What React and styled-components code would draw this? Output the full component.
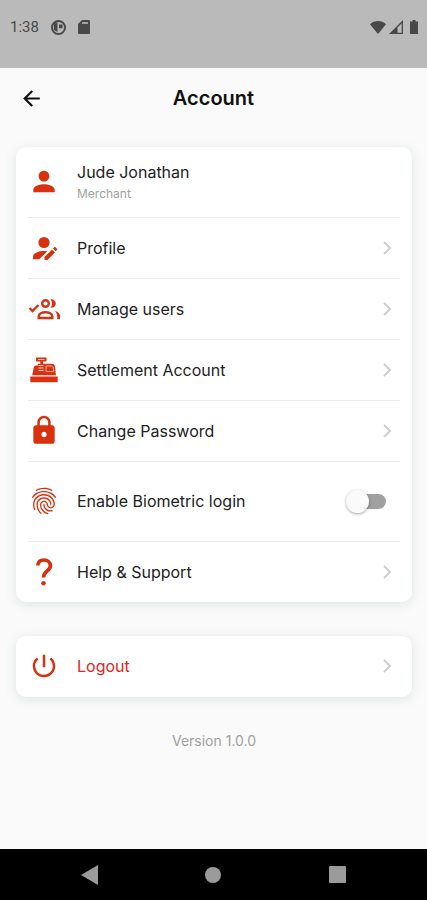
import React, { useState } from "react";
import styled, { createGlobalStyle } from "styled-components";
import {
  MdArrowBack,
  MdFingerprint,
  MdLock,
  MdPerson,
  MdPowerSettingsNew,
} from "react-icons/md";

const GlobalStyle = createGlobalStyle`
  * {
    box-sizing: border-box;
  }

  body {
    margin: 0;
    background: #fafafa;
    font-family: Inter, "Open Sans", sans-serif;
  }
`;

const Screen = styled.div`
  display: flex;
  flex-direction: column;
  min-height: 100vh;
`;

const StatusBar = styled.div`
  display: flex;
  justify-content: space-between;
  height: 68px;
  padding: 15px 7px 0 10px;
  background: #bababa;
  color: #484848;
`;

const StatusGroup = styled.div`
  display: flex;
  align-items: center;
  gap: ${(props) => props.$gap};
  height: 24px;
`;

const Clock = styled.span`
  font-family: Roboto, sans-serif;
  font-size: 15px;
`;

const Header = styled.header`
  display: grid;
  grid-template-columns: 30px 1fr 30px;
  align-items: center;
  height: 60px;
  padding: 0 16px;
`;

const BackButton = styled.button`
  display: flex;
  justify-content: center;
  padding: 0;
  border: 0;
  background: none;
  color: #111;
`;

const Title = styled.h1`
  margin: 0;
  color: #111;
  font-size: 20px;
  font-weight: 600;
  text-align: center;
`;

const Main = styled.main`
  display: flex;
  flex: 1;
  flex-direction: column;
  gap: 34px;
  padding: 19px 15px 24px 16px;
`;

const Card = styled.section`
  padding: 0 12px;
  border-radius: 10px;
  background: #fff;
  box-shadow: 0 2px 12px rgba(60, 90, 100, 0.14);
`;

const Row = styled.div`
  display: grid;
  grid-template-columns: 32px 1fr auto;
  align-items: center;
  column-gap: 17px;
  height: ${(props) => props.$height || "61px"};
  padding-bottom: 1px;
  color: ${(props) => props.$color || "#222"};
  font-size: 16px;
  line-height: 24px;
  text-decoration: none;

  & + & {
    border-top: 1px solid #ececec;
  }
`;

const IconBox = styled.span`
  display: flex;
  align-items: center;
  justify-content: center;
  height: 32px;
  color: #d9310f;
`;

const Role = styled.div`
  color: #a0a0a0;
  font-size: 12px;
  line-height: 20px;
`;

const Arrow = styled.svg`
  margin-right: 8px;
`;

const Switch = styled.input`
  appearance: none;
  display: flex;
  align-items: center;
  width: 32px;
  height: 15px;
  margin: 0 14px 0 0;
  border-radius: 8px;
  background: #a0a0a0;

  &::before {
    content: "";
    flex: none;
    width: 23px;
    height: 23px;
    margin-left: -8px;
    border-radius: 50%;
    background: #fafafa;
    box-shadow: 0 1px 3px rgba(0, 0, 0, 0.35);
  }

  &:checked {
    background: #eba293;
  }

  &:checked::before {
    margin-left: 17px;
    background: #d9310f;
  }
`;

const Version = styled.p`
  margin: 0;
  color: #a0a0a0;
  font-size: 14px;
  line-height: 20px;
  text-align: center;
`;

const NavBar = styled.nav`
  display: grid;
  grid-template-columns: repeat(3, 1fr);
  height: 51px;
  padding: 0 28px;
  background: #000;
`;

const NavButton = styled.button`
  display: flex;
  align-items: center;
  justify-content: center;
  padding: 0;
  border: 0;
  background: none;
  color: #9b9b9b;
`;

function ProfileIcon() {
  return (
    <svg width="32" height="32" viewBox="0 0 32 32" fill="currentColor">
      <circle cx="16" cy="10.500" r="5.600" />
      <path d="M5 27.300v-2.800c0-3.500 5.500-5.800 12.500-5.600l2 .2-8.200 8.200z" />
      <path d="M16.500 28v-3l7.500-7.500 3 3-7.500 7.500z" />
      <path d="M25 16.500l1.200-1.200c.4-.4.900-.4 1.300 0l1.400 1.400c.4.400.4.900 0 1.300l-1.200 1.200z" />
    </svg>
  );
}

function UsersIcon() {
  return (
    <svg
      width="32"
      height="32"
      viewBox="0 0 32 32"
      fill="none"
      stroke="currentColor"
      strokeWidth="2.400"
    >
      <path d="M1.500 15l3 3 6-6" />
      <circle cx="17.500" cy="10.500" r="3.300" />
      <path d="M10.700 25v-1.400c0-2.900 3.400-4.400 6.800-4.400s6.800 1.500 6.800 4.400V25z" />
      <path
        d="M22.500 6.200c3-.3 5.300 1.700 5.300 4.300s-2.300 4.600-5.300 4.300c2.100-2.800 2.100-5.800 0-8.600zM26.700 17.800c3.400 1 5.500 3 5.500 5.700v2.700h-3v-2.700c0-2.200-.8-4-2.500-5.700z"
        fill="currentColor"
        stroke="none"
      />
    </svg>
  );
}

function RegisterIcon() {
  return (
    <svg width="32" height="32" viewBox="0 0 32 32" fill="currentColor">
      <path d="M8 3.500h10.500v4H15v2.200h8.500c2 0 3 .8 3.400 2.500l1.100 9H4.200l1.500-7.500c.3-1.500 1-2.200 2.500-2.200h1.600V9.700h2.500V7.500H8z" />
      <path
        d="M10 5.500h6.500M10.500 11.500h5M10.500 14h5M10.500 16.500h5"
        stroke="#fbd9d2"
        strokeWidth="1.200"
      />
      <path
        d="M18 17.500V12h5.500c1 0 1.500.8 1.700 1.800l.6 3.700z"
        fill="none"
        stroke="#f3ab9c"
        strokeWidth="1"
      />
      <path d="M2.300 22.500h27.400v5.700H2.300z" />
    </svg>
  );
}

function QuestionIcon() {
  return (
    <svg width="32" height="32" viewBox="0 0 32 32" fill="none" stroke="currentColor">
      <path
        d="M9.800 9.500C10 5.800 12.500 4 16 4s6.400 2.200 6.400 5.700c0 5.300-6.900 5.300-6.900 11.800"
        strokeWidth="3.700"
      />
      <circle cx="15.500" cy="27.300" r="2.300" fill="currentColor" stroke="none" />
    </svg>
  );
}

function Chevron() {
  return (
    <Arrow
      width="10"
      height="14"
      viewBox="0 0 10 14"
      fill="none"
      stroke="#cecece"
      strokeWidth="2"
    >
      <path d="M2 1l6 6-6 6" />
    </Arrow>
  );
}

const links = [
  { label: "Profile", icon: <ProfileIcon /> },
  { label: "Manage users", icon: <UsersIcon /> },
  { label: "Settlement Account", icon: <RegisterIcon /> },
  { label: "Change Password", icon: <MdLock size={33} /> },
];

function LinkRow({ label, icon, color }) {
  return (
    <Row as="a" href="#" $color={color}>
      <IconBox>{icon}</IconBox>
      <span>{label}</span>
      <Chevron />
    </Row>
  );
}

function PhoneStatus() {
  return (
    <StatusBar>
      <StatusGroup $gap="12px">
        <Clock>1:38</Clock>
        <svg width="15" height="15" viewBox="0 0 15 15">
          <circle cx="7.500" cy="7.500" r="6.500" fill="none" stroke="#484848" strokeWidth="2" />
          <path d="M3 2.500h3.500V12L3 10zM8 4.500h3.500v3.700H8z" fill="#484848" />
        </svg>
        <svg width="12" height="14" viewBox="0 0 12 14">
          <path
            d="M4 0h6.500C11.500 0 12 .5 12 1.500v11c0 1-.5 1.500-1.500 1.500h-9C.5 14 0 13.500 0 12.500V4z"
            fill="#484848"
          />
          <path d="M4 3h6" stroke="#a0a0a0" strokeWidth="2" />
        </svg>
      </StatusGroup>
      <StatusGroup $gap="3px">
        <svg width="16" height="13" viewBox="0 0 16 13" fill="#484848">
          <path d="M8 13L0 3.200C4.500-1 11.500-1 16 3.200z" />
        </svg>
        <svg width="14" height="14" viewBox="0 0 14 14" fill="#484848">
          <path d="M0 14L14 0v14zM8.500 7.500v5.300h4.200V3.200z" fillRule="evenodd" />
        </svg>
        <svg width="14" height="14" viewBox="0 0 14 14" fill="#484848">
          <path d="M6.500 0h3v1.500H12V14H4V1.500h2.500z" />
        </svg>
      </StatusGroup>
    </StatusBar>
  );
}

function App() {
  const [biometric, setBiometric] = useState(false);

  return (
    <Screen>
      <GlobalStyle />
      <PhoneStatus />
      <Header>
        <BackButton type="button" aria-label="Back">
          <MdArrowBack size={25} />
        </BackButton>
        <Title>Account</Title>
      </Header>
      <Main>
        <Card>
          <Row $height="70px">
            <IconBox>
              <MdPerson size={33} />
            </IconBox>
            <div>
              Jude Jonathan
              <Role>Merchant</Role>
            </div>
          </Row>
          {links.map((link) => (
            <LinkRow key={link.label} {...link} />
          ))}
          <Row $height="80px">
            <IconBox>
              <MdFingerprint size={32} />
            </IconBox>
            <label htmlFor="biometric">Enable Biometric login</label>
            <Switch
              id="biometric"
              type="checkbox"
              checked={biometric}
              onChange={(e) => setBiometric(e.target.checked)}
            />
          </Row>
          <LinkRow label="Help & Support" icon={<QuestionIcon />} />
        </Card>
        <Card>
          <LinkRow label="Logout" color="#e0241f" icon={<MdPowerSettingsNew size={30} />} />
        </Card>
        <Version>Version 1.0.0</Version>
      </Main>
      <NavBar>
        <NavButton type="button" aria-label="Back">
          <svg width="17" height="20" viewBox="0 0 17 20" fill="currentColor">
            <path d="M17 0v20L0 10z" />
          </svg>
        </NavButton>
        <NavButton type="button" aria-label="Home">
          <svg width="16" height="16" viewBox="0 0 16 16" fill="currentColor">
            <circle cx="8" cy="8" r="8" />
          </svg>
        </NavButton>
        <NavButton type="button" aria-label="Recent apps">
          <svg width="17" height="17" viewBox="0 0 17 17" fill="currentColor">
            <rect width="17" height="17" rx="1" />
          </svg>
        </NavButton>
      </NavBar>
    </Screen>
  );
}

export default App;
